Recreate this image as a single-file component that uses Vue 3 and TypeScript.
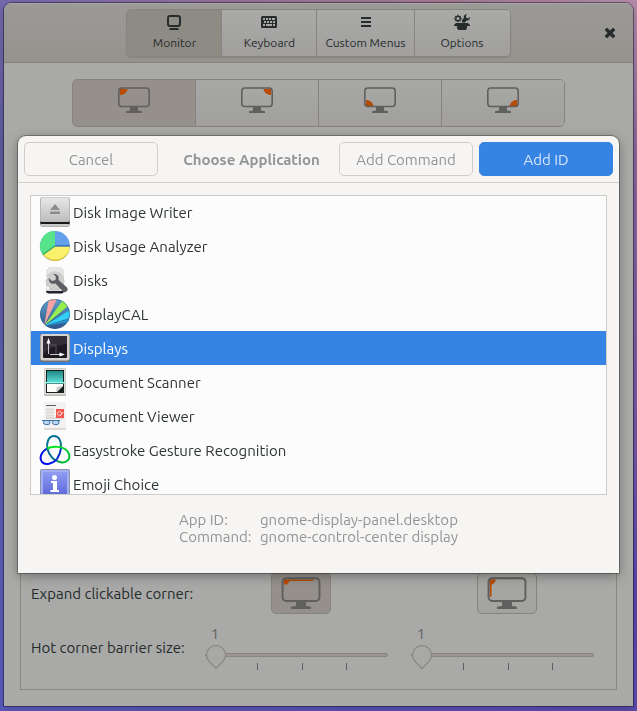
<script setup lang="ts">
import { ref, computed } from 'vue'

type Corner = 'tl' | 'tr' | 'bl' | 'br'
interface AppEntry {
  name: string
  icon: string
  id: string
  command: string
}

const tabs = [
  { label: 'Monitor', icon: 'monitor' },
  { label: 'Keyboard', icon: 'keyboard' },
  { label: 'Custom Menus', icon: 'menu' },
  { label: 'Options', icon: 'tools' },
]
const activeTab = ref('Monitor')

const corners: { id: Corner; label: string; path: string }[] = [
  { id: 'tl', label: 'Top left corner', path: 'M2 2H9.500C9 5.500 6 8 2 8Z' },
  { id: 'tr', label: 'Top right corner', path: 'M30 2H22.500C23 5.500 26 8 30 8Z' },
  { id: 'bl', label: 'Bottom left corner', path: 'M2 19V13C6 13 8.500 15.500 9.500 19Z' },
  { id: 'br', label: 'Bottom right corner', path: 'M30 19V13C26 13 23.500 15.500 22.500 19Z' },
]
const activeCorner = ref<Corner>('tl')

const expandModes = [
  { id: 'horizontal', label: 'Expand horizontally', path: 'M2 2H26V3.200H7L4.500 6H2Z' },
  { id: 'vertical', label: 'Expand vertically', path: 'M2 2H7L6 4.500L3.400 6.500V16H2Z' },
]
const expandMode = ref('horizontal')
const barriers = ref([
  { id: 'barrier-h', label: 'Horizontal barrier size', value: 1 },
  { id: 'barrier-v', label: 'Vertical barrier size', value: 1 },
])

const apps: AppEntry[] = [
  { name: 'Disk Image Writer', icon: 'writer', id: 'gnome-disk-image-writer.desktop', command: 'gnome-disk-image-mounter --writable' },
  { name: 'Disk Usage Analyzer', icon: 'usage', id: 'org.gnome.baobab.desktop', command: 'baobab' },
  { name: 'Disks', icon: 'disks', id: 'org.gnome.DiskUtility.desktop', command: 'gnome-disks' },
  { name: 'DisplayCAL', icon: 'cal', id: 'displaycal.desktop', command: 'displaycal' },
  { name: 'Displays', icon: 'displays', id: 'gnome-display-panel.desktop', command: 'gnome-control-center display' },
  { name: 'Document Scanner', icon: 'scanner', id: 'simple-scan.desktop', command: 'simple-scan' },
  { name: 'Document Viewer', icon: 'viewer', id: 'org.gnome.Evince.desktop', command: 'evince' },
  { name: 'Easystroke Gesture Recognition', icon: 'easystroke', id: 'easystroke.desktop', command: 'easystroke' },
  { name: 'Emoji Choice', icon: 'emoji', id: 'emoji-choice.desktop', command: 'ibus-ui-emojier' },
]
const selectedName = ref('Displays')
const selected = computed(() => apps.find((a) => a.name === selectedName.value) ?? apps[0])
</script>

<template>
  <div class="desktop">
    <main class="window">
      <header class="titlebar">
        <nav class="tabs" aria-label="Sections">
          <button
            v-for="t in tabs"
            :key="t.label"
            type="button"
            class="tab"
            :class="{ active: t.label === activeTab }"
            @click="activeTab = t.label"
          >
            <svg class="tab-icon" viewBox="0 0 16 16" aria-hidden="true">
              <g v-if="t.icon === 'monitor'">
                <rect x="2" y="2" width="12" height="10" rx="2" fill="none" stroke="currentColor" stroke-width="2" />
                <path d="M4 14H12L13 16H3Z" fill="currentColor" />
              </g>
              <g v-else-if="t.icon === 'keyboard'">
                <rect x="0" y="2" width="16" height="12" rx="1.500" fill="currentColor" />
                <path
                  class="keys"
                  d="M2 4H4V6H2ZM5 4H7V6H5ZM8 4H10V6H8ZM11 4H14V6H11ZM3 7H5V9H3ZM6 7H8V9H6ZM9 7H11V9H9ZM12 7H14V9H12ZM2 10H4V12H2ZM5 10H11V12H5ZM12 10H14V12H12Z"
                />
              </g>
              <path v-else-if="t.icon === 'menu'" d="M3 3H13V5H3ZM3 7H13V9H3ZM3 11H13V13H3Z" fill="currentColor" />
              <g v-else fill="currentColor">
                <path d="M2 9H14L16 11V12H13V14L12 16H4L3 14V12H0V11Z" />
                <circle cx="4" cy="4.500" r="2.200" fill="none" stroke="currentColor" stroke-width="1.300" />
                <path
                  d="M4 .8V2M4 7V8.200M.3 4.500H1.500M6.500 4.500H7.700M1.400 1.900L2.200 2.700M5.800 6.300L6.600 7.100M6.600 1.900L5.800 2.700M1.400 7.100L2.200 6.300"
                  stroke="currentColor"
                  stroke-width="1.400"
                />
                <path d="M13 0C10.500 .2 9.300 2 9.900 4L8 6V8.500H11L12.500 6.600C14.700 6.900 16 5.200 16 3L14 4.500L12 3.500V1.800Z" />
              </g>
            </svg>
            <span>{{ t.label }}</span>
          </button>
        </nav>
        <button type="button" class="close" aria-label="Close">
          <svg viewBox="0 0 10 10" aria-hidden="true">
            <path d="M2 2L8 8M8 2L2 8" stroke="currentColor" stroke-width="3.400" stroke-linecap="square" />
          </svg>
        </button>
      </header>

      <div class="content">
        <div class="corners" role="group" aria-label="Corner">
          <button
            v-for="c in corners"
            :key="c.id"
            type="button"
            class="corner"
            :class="{ active: c.id === activeCorner }"
            :aria-label="c.label"
            @click="activeCorner = c.id"
          >
            <svg class="screen" viewBox="0 0 32 26" aria-hidden="true">
              <path class="accent" :d="c.path" />
              <rect class="bezel" x="0.800" y="1" width="30.400" height="18.500" rx="3" />
              <path class="stand" d="M12 20H20V23.500L24 24.200V26H8V24.200L12 23.500Z" />
            </svg>
          </button>
        </div>

        <section class="frame">
          <div class="settings">
            <span class="setting-label">Expand clickable corner:</span>
            <div v-for="m in expandModes" :key="m.id" class="cell">
              <button
                type="button"
                class="expand"
                :class="{ active: m.id === expandMode }"
                :aria-label="m.label"
                @click="expandMode = m.id"
              >
                <svg class="screen large" viewBox="0 0 32 26" aria-hidden="true">
                  <path class="accent" :d="m.path" />
                  <rect class="bezel" x="1" y="1" width="30" height="18.500" rx="3" />
                  <path class="stand" d="M12 20H20V23.500L24 24.200V26H8V24.200L12 23.500Z" />
                </svg>
              </button>
            </div>
            <span class="setting-label">Hot corner barrier size:</span>
            <div v-for="b in barriers" :key="b.id" class="slider">
              <output class="slider-value" :for="b.id">{{ b.value }}</output>
              <input :id="b.id" v-model.number="b.value" type="range" min="1" max="20" :aria-label="b.label" />
              <div class="ticks"><i></i><i></i><i></i></div>
            </div>
          </div>
        </section>
      </div>
    </main>

    <section class="dialog" role="dialog" aria-labelledby="dialog-title">
      <header class="dialog-bar">
        <button type="button" class="btn">Cancel</button>
        <h1 id="dialog-title">Choose Application</h1>
        <button type="button" class="btn">Add Command</button>
        <button type="button" class="btn primary">Add ID</button>
      </header>

      <ul class="list" role="listbox" aria-label="Applications" tabindex="0">
        <li
          v-for="a in apps"
          :key="a.name"
          role="option"
          class="row"
          :class="{ selected: a.name === selectedName }"
          :aria-selected="a.name === selectedName"
          @click="selectedName = a.name"
        >
          <svg class="app-icon" viewBox="0 0 32 32" aria-hidden="true">
            <g v-if="a.icon === 'writer'">
              <defs>
                <linearGradient id="writer-body" x1="0" y1="0" x2="0" y2="1">
                  <stop offset="0" stop-color="#e8e8e8" />
                  <stop offset="1" stop-color="#bdbdbd" />
                </linearGradient>
              </defs>
              <path d="M3 2H29L31 24V29L29 31H3L1 29V24Z" fill="#999" />
              <rect x="1" y="1" width="30" height="26" rx="2.500" fill="#b5b5b5" />
              <rect x="2" y="1.500" width="28" height="24" rx="2" fill="url(#writer-body)" />
              <path d="M1.500 25C2 26 3 26 4 26H28C29 26 30 26 30.500 25V28H1.500Z" fill="#17171c" />
              <path d="M2 28H30V29L29 30.500H3L2 29Z" fill="#c8c8c8" />
              <path d="M16 8L21 14H11ZM11 15.500H21V18H11Z" fill="#8d8d8d" />
            </g>
            <g v-else-if="a.icon === 'usage'">
              <circle cx="16" cy="16" r="15" fill="#62a0ea" />
              <path d="M16 16V1A15 15 0 0 0 4 25Z" fill="#57e389" />
              <path d="M16 16L4 25A15 15 0 0 0 31 16Z" fill="#e5c02c" />
              <path d="M16 16L4 24A15 14 0 0 0 31 16Z" fill="#f9f06b" />
              <path d="M16 16H31" stroke="#1a5fb4" stroke-width="1.200" />
              <path d="M16 16L4 24.500" stroke="#26a269" stroke-width="1.200" />
            </g>
            <g v-else-if="a.icon === 'disks'">
              <rect x="7" y="3" width="18" height="25" rx="1" fill="#e6e5e3" />
              <path d="M7 26H25V28L23 29.500H9L7 28Z" fill="#241f31" />
              <path d="M7 24H25V27H7Z" fill="#dedddb" />
              <circle cx="16" cy="17" r="9.500" fill="#c5c3c1" />
              <circle cx="16" cy="16.500" r="9" fill="#cfcecc" />
              <path d="M7 3H9V5H7ZM23 3H25V5H23ZM7 13H8V15H7ZM8 23H10V25H8Z" fill="#fff" />
              <path
                d="M14.500 10C18.500 9.800 20.500 12.500 19.500 16L28 23.500C30 26.500 26.500 29.500 24 27.500L16.500 19.500C12.500 20.500 9.200 18.500 9.800 14L13 17L16.500 16L17 13Z"
                fill="#5e5c64"
              />
            </g>
            <g v-else-if="a.icon === 'cal'">
              <defs>
                <linearGradient id="cal-base" x1="0" y1="0" x2="0" y2="1">
                  <stop offset="0" stop-color="#5f9fc8" />
                  <stop offset="1" stop-color="#2d568c" />
                </linearGradient>
                <clipPath id="cal-clip"><circle cx="16" cy="16" r="15" /></clipPath>
              </defs>
              <circle cx="16" cy="16" r="15" fill="url(#cal-base)" />
              <g clip-path="url(#cal-clip)">
                <path d="M5 28L10 1H18Z" fill="#f7a2a2" />
                <path d="M5 28L24 2L29 8Z" fill="#96f04c" />
                <path d="M5 28L31 12V20Z" fill="#2fd0f3" />
                <path d="M5 28L31 21V24Z" fill="#2296ce" />
              </g>
              <circle cx="16" cy="16" r="14.500" fill="none" stroke="#2d568c" stroke-opacity="0.400" />
            </g>
            <g v-else-if="a.icon === 'displays'">
              <rect x="1" y="2" width="30" height="28" rx="2" fill="#77716d" />
              <rect x="1.500" y="2" width="29" height="26.500" rx="2" fill="#d5d3cf" />
              <rect x="4" y="4" width="24" height="22" rx="1" fill="#1e1a22" />
              <path d="M4 4H28V12C18 13 10 16 4 22Z" fill="#332f38" />
              <path d="M10 13H17V22" fill="none" stroke="#57535c" />
              <path d="M9.500 22V11M11 22.500H21" stroke="#c8c6ca" />
              <path d="M9.500 6L11.500 11.500H7.500ZM26 22.500L20.500 24.500V20.500Z" fill="#fff" />
            </g>
            <g v-else-if="a.icon === 'scanner'">
              <defs>
                <linearGradient id="scanner-light" x1="0" y1="0" x2="0" y2="1">
                  <stop offset="0" stop-color="#218787" />
                  <stop offset="1" stop-color="#5ee2da" />
                </linearGradient>
              </defs>
              <rect x="5" y="2" width="22" height="28" rx="1.500" fill="#b9b7b1" />
              <rect x="5.500" y="2.500" width="21" height="26" rx="1" fill="#deddd7" />
              <rect x="7" y="4" width="18" height="23" fill="#15201f" />
              <rect x="8" y="5" width="16" height="12" fill="url(#scanner-light)" />
              <rect x="6" y="16" width="20" height="1.500" fill="#8bfff3" />
              <path d="M8 18H24V20L18 26H8Z" fill="#fbfbfa" />
              <path d="M17 26L18 21L24 20Z" fill="#c9c9c9" />
            </g>
            <g v-else-if="a.icon === 'viewer'">
              <rect x="5" y="2" width="22" height="28" rx="1.500" fill="#f3f2f0" />
              <path d="M5 28H27V30H5Z" fill="#dddad7" />
              <path d="M7 5.500H17" stroke="#5e5c64" />
              <path d="M7 9.500H15M7 12.500H15M7 15.500H15M7 18H25" stroke="#dcd9d6" stroke-width="2" />
              <rect x="17" y="9" width="8" height="9" fill="#f2584d" />
              <circle cx="20.500" cy="13.500" r="2" fill="none" stroke="#ffd2cc" />
              <path d="M21.500 15.500L24 12" stroke="#ffd2cc" />
              <path d="M3 20.500H21" stroke="#3d6a9e" />
              <rect x="4.500" y="20.500" width="6.500" height="4" rx="2" fill="#bcd7f3" stroke="#3d72ad" />
              <rect x="13.500" y="20.500" width="6.500" height="4" rx="2" fill="#bcd7f3" stroke="#3d72ad" />
            </g>
            <g v-else-if="a.icon === 'easystroke'" fill="none" stroke-width="2">
              <defs>
                <linearGradient id="stroke-a" x1="0" y1="1" x2="1" y2="0">
                  <stop offset="0" stop-color="#0202ff" />
                  <stop offset="1" stop-color="#003cb0" />
                </linearGradient>
                <linearGradient id="stroke-b" x1="0" y1="0" x2="1" y2="1">
                  <stop offset="0" stop-color="#007c8c" />
                  <stop offset="0.500" stop-color="#08689a" />
                  <stop offset="1" stop-color="#00a848" />
                </linearGradient>
                <linearGradient id="stroke-c" x1="0" y1="0" x2="1" y2="1">
                  <stop offset="0" stop-color="#00f010" />
                  <stop offset="1" stop-color="#00b53e" />
                </linearGradient>
              </defs>
              <path d="M22 14C22.500 7 20 2 15 2C9.500 2 7 9 8.500 15C10 21 14.500 27 21 28" stroke="url(#stroke-b)" />
              <path d="M8 14.500C2 18 0 24 3 28C6 31.500 14 30 18 25C20 22 21.500 19 22 14" stroke="url(#stroke-a)" />
              <path d="M8 14.500C14 11.500 25 12 29 18C33 25 27 30 21 28" stroke="url(#stroke-c)" />
            </g>
            <g v-else>
              <defs>
                <linearGradient id="emoji-body" x1="0" y1="0" x2="0" y2="1">
                  <stop offset="0" stop-color="#8f9cf0" />
                  <stop offset="1" stop-color="#5660d8" />
                </linearGradient>
              </defs>
              <rect x="1" y="1" width="30" height="30" rx="2" fill="#8c94a8" />
              <rect x="2" y="2" width="28" height="29" rx="1" fill="#a3aef5" />
              <rect x="4" y="4" width="24" height="27" fill="url(#emoji-body)" />
              <circle cx="15.500" cy="9.500" r="2.500" fill="#fff" />
              <path d="M12 13H18V22H20V24H11.500V22H14V15H12Z" fill="#fff" />
            </g>
          </svg>
          <span>{{ a.name }}</span>
        </li>
      </ul>

      <dl class="details">
        <dt>App ID:</dt>
        <dd>{{ selected.id }}</dd>
        <dt>Command:</dt>
        <dd>{{ selected.command }}</dd>
      </dl>
    </section>
  </div>
</template>

<style>
body {
  margin: 0;
}
</style>

<style scoped>
* {
  box-sizing: border-box;
}

.desktop {
  position: relative;
  display: flex;
  min-height: 100vh;
  padding: 3px 4px 5px;
  background:
    linear-gradient(to bottom, transparent 0, #5f5b9f 20%, #595fb4 70%, #585abc 100%) left / 40px 100% no-repeat,
    linear-gradient(to bottom, #b28aa6 0, #886699 22%, #7355a4 62%, #5648a8 82%, #584caa 100%) right / 40px 100% no-repeat,
    linear-gradient(to right, #595abb, #5a4ab0) bottom / 100% 20px no-repeat,
    linear-gradient(to right, #7468ac 0, #9c7494 45%, #a37b90 70%, #b28aa6 100%);
  color: #262b2b;
  font-family: Ubuntu, "Noto Sans", sans-serif;
  font-size: 15px;
  line-height: 17px;
}

button {
  margin: 0;
  padding: 0;
  font: inherit;
  color: inherit;
}

.window {
  flex: 1;
  display: flex;
  flex-direction: column;
  overflow: hidden;
  border-radius: 8px 8px 0 0;
  background: #a9aaa8;
  box-shadow: 0 0 0 1px rgba(30, 20, 50, 0.5), 0 2px 8px rgba(0, 0, 0, 0.2);
}

.titlebar {
  display: grid;
  grid-template-columns: 1fr auto 1fr;
  align-items: center;
  height: 60px;
  padding: 0 16px;
  border-bottom: 1px solid #86817c;
  background: linear-gradient(#9b9a97, #96928e);
  box-shadow: inset 0 1px #a9a9a6;
}

.tabs {
  grid-column: 2;
  display: flex;
  border: 1px solid #87837f;
  border-radius: 5px;
  overflow: hidden;
  box-shadow: 0 1px 1px rgba(0, 0, 0, 0.08);
}

.tab {
  display: flex;
  flex-direction: column;
  align-items: center;
  gap: 5px;
  min-width: 95px;
  height: 46px;
  padding: 4px 8px 0;
  border: 0;
  border-right: 1px solid #87837f;
  background: linear-gradient(#aaaaa8, #a09f9d);
  font-size: 12px;
  line-height: 16px;
}

.tab:last-child,
.corner:last-child {
  border-right: 0;
}

.tab.active {
  background: #8e8a84;
}

.tab-icon {
  flex: none;
  width: 16px;
  height: 16px;
}

.keys {
  fill: #a8a8a6;
}

.close {
  grid-column: 3;
  justify-self: end;
  display: grid;
  place-items: center;
  width: 14px;
  height: 14px;
  border: 0;
  background: none;
}

.close svg {
  width: 10px;
  height: 10px;
}

.content {
  flex: 1;
  display: flex;
  flex-direction: column;
  align-items: center;
  gap: 16px;
  padding: 16px;
}

.corners {
  display: flex;
  width: 493px;
  max-width: 100%;
  border: 1px solid #86827e;
  border-radius: 5px;
  overflow: hidden;
}

.corner {
  flex: 1;
  display: flex;
  justify-content: center;
  height: 46px;
  padding-top: 7px;
  border: 0;
  border-right: 1px solid #86827e;
  background: linear-gradient(#a8a8a6, #a1a09e);
}

.corner.active,
.expand.active {
  background: #95908c;
}

.screen {
  width: 32px;
  height: 26px;
}

.screen.large {
  width: 40px;
  height: 32px;
}

.accent {
  fill: #b84a02;
}

.bezel {
  fill: none;
  stroke: #5f5f5e;
  stroke-width: 1.6;
}

.stand {
  fill: #5f5f5e;
}

.frame {
  flex: 1;
  align-self: stretch;
  display: flex;
  flex-direction: column;
  justify-content: flex-end;
  padding: 0 6px 19px 10px;
  border: 1px solid #898783;
}

.settings {
  display: grid;
  grid-template-columns: 167px 1fr 1fr;
  row-gap: 11px;
  align-items: center;
}

.setting-label {
  white-space: nowrap;
}

.cell {
  display: flex;
  justify-content: center;
}

.expand {
  display: grid;
  place-items: center;
  width: 60px;
  height: 42px;
  border: 1px solid #87837f;
  border-radius: 5px;
  background: linear-gradient(#a8a8a6, #a3a2a0);
}

.slider {
  display: flex;
  flex-direction: column;
  padding: 0 16px 0 7px;
}

.slider-value {
  width: 20px;
  height: 20px;
  text-align: center;
  color: #5d6060;
}

input[type='range'] {
  appearance: none;
  width: 100%;
  height: 20px;
  margin: 0;
  background: none;
}

input[type='range']::-webkit-slider-runnable-track {
  height: 4px;
  border: 1px solid #898581;
  border-radius: 2px;
  background: #9a9590;
}

input[type='range']::-webkit-slider-thumb {
  appearance: none;
  width: 20px;
  height: 20px;
  margin-top: -9px;
  border: 1px solid #86827e;
  border-radius: 50% 50% 0 50%;
  background: #a8a8a6;
  transform: rotate(45deg);
}

.ticks {
  display: flex;
  justify-content: space-between;
  height: 7px;
  margin: -2px 41px 0 52px;
}

.ticks i {
  width: 1px;
  background: #5d6060;
}

.dialog {
  position: absolute;
  top: 136px;
  left: 18px;
  right: 18px;
  overflow: hidden;
  border-radius: 8px 8px 0 0;
  background: #f6f5f3;
  box-shadow: 0 0 0 1px rgba(0, 0, 0, 0.3), 0 3px 12px rgba(0, 0, 0, 0.35);
  color: #929595;
}

.dialog-bar {
  display: flex;
  align-items: center;
  gap: 6px;
  padding: 6px;
  border-bottom: 1px solid #d2cfcb;
}

.dialog-bar h1 {
  flex: 1;
  margin: 0;
  padding-left: 6px;
  font-size: 15px;
  font-weight: 700;
  text-align: center;
  white-space: nowrap;
}

.btn {
  width: 134px;
  height: 34px;
  border: 1px solid #d0cecb;
  border-radius: 5px;
  background: #f6f5f3;
}

.btn.primary {
  border-color: #3584e4;
  background: #3584e4;
  color: #d7e6fa;
}

.list {
  height: 300px;
  margin: 12px 12px 0;
  padding: 0;
  border: 1px solid #d0ccc8;
  background: #fcfcfc;
  list-style: none;
  overflow-y: auto;
  scrollbar-width: none;
  color: #2e3436;
}

.row {
  display: flex;
  align-items: center;
  gap: 2px;
  height: 34px;
  padding-left: 8px;
}

.row:first-child {
  margin-top: -1px;
}

.row.selected {
  background: #3584e4;
  color: #fff;
}

.app-icon {
  flex: none;
  width: 32px;
  height: 32px;
}

.details {
  display: grid;
  grid-template-columns: 73px max-content;
  column-gap: 8px;
  justify-content: center;
  margin: 16px 0 28px;
}

.details dd {
  margin: 0;
}
</style>
